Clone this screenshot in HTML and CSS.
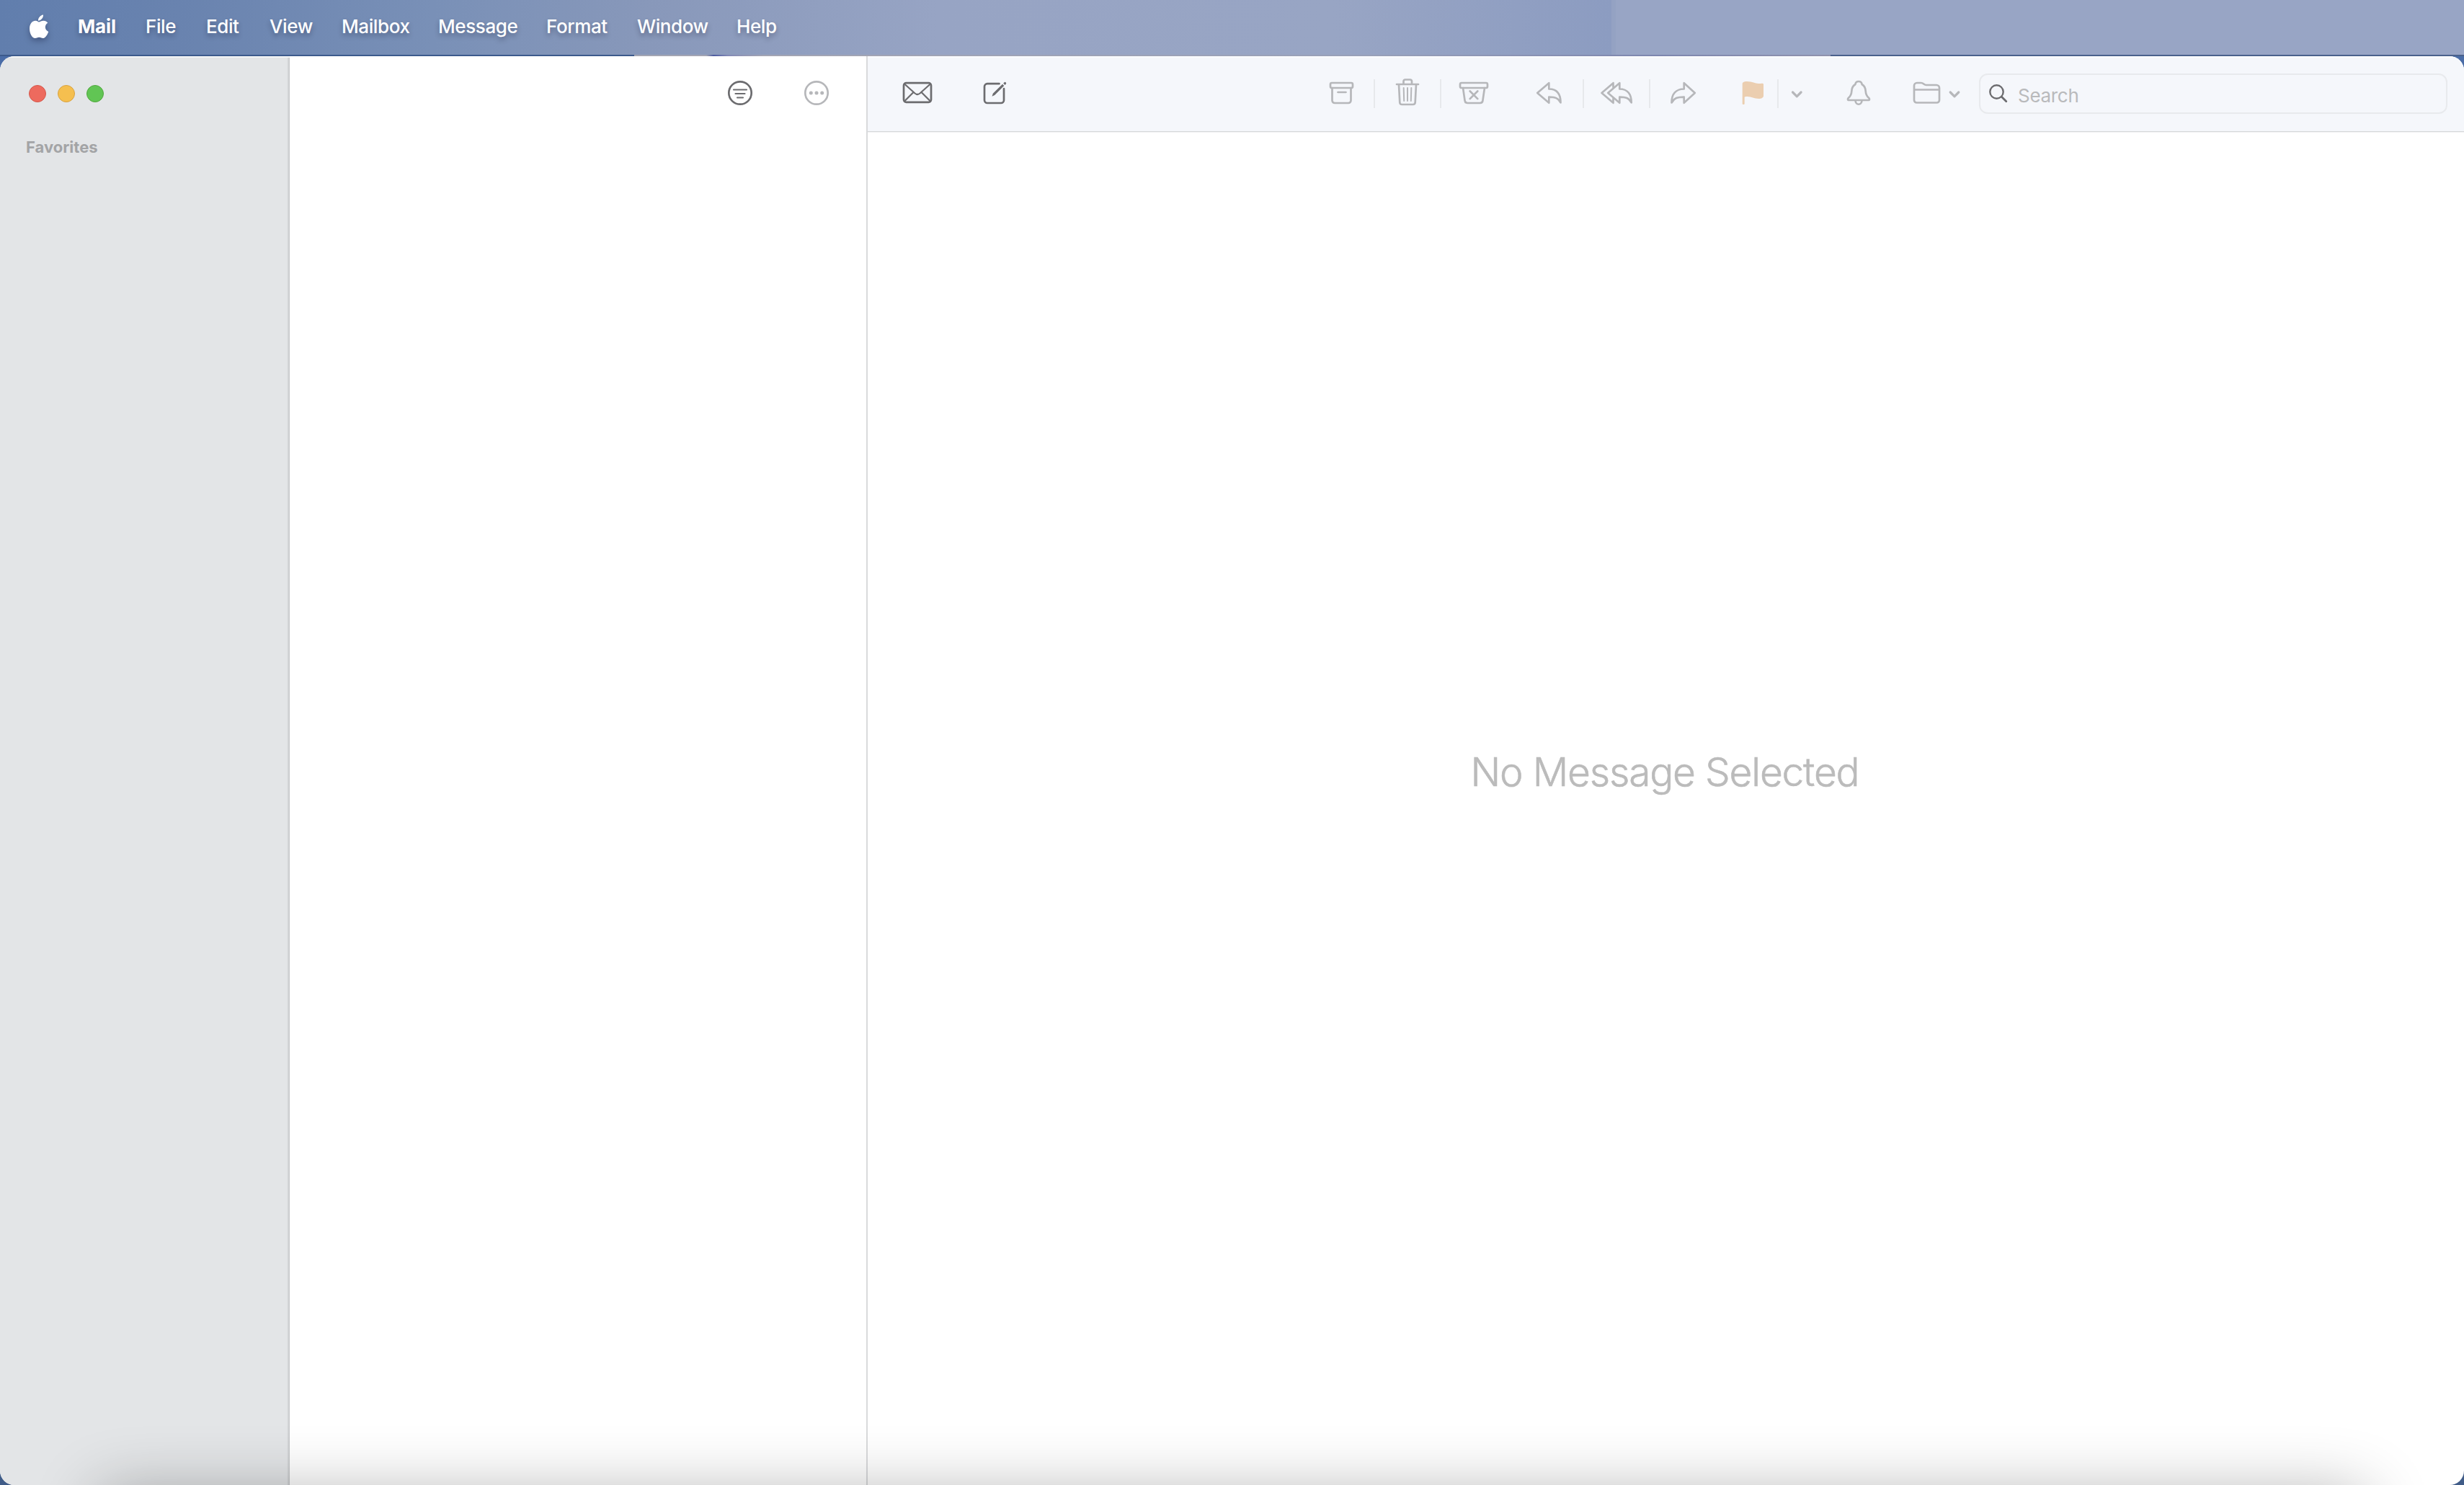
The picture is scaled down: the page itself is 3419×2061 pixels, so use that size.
FILE: index.html
```html
<!DOCTYPE html>
<html lang="en">
<head>
<meta charset="utf-8">
<title>Mail</title>
<link rel="stylesheet" href="styles.css">
</head>
<body>
<nav class="menubar">
  <svg class="apple" width="28" height="36" viewBox="0 0 28 36" fill="#fff"><path d="M20 .5c.3 4-3 8-7 8.200C12.600 5 16.200 1 20 .5z"/><path d="M14 10.500c1.500 0 3.500-1.700 6.500-1.700 2.200 0 4.400 1 5.800 3-5 3-4.300 10 .9 12.100-1.200 3.600-4 8.900-7.200 9.100-2 .1-3-1.300-5.700-1.300-2.600 0-3.700 1.300-5.500 1.300C4.700 33 1 26.500 1 19.700c0-7 4.200-10.900 8.300-10.900 2 0 3.700 1.700 4.700 1.700z"/></svg>
  <span class="menu app">Mail</span>
  <span class="menu">File</span>
  <span class="menu">Edit</span>
  <span class="menu">View</span>
  <span class="menu">Mailbox</span>
  <span class="menu">Message</span>
  <span class="menu">Format</span>
  <span class="menu">Window</span>
  <span class="menu">Help</span>
</nav>
<div class="backdrop-strip"></div>
<main class="window">
  <aside class="sidebar">
    <div class="lights"><i class="light close"></i><i class="light minimize"></i><i class="light zoom"></i></div>
    <h2 class="heading">Favorites</h2>
  </aside>
  <section class="list">
    <svg class="icon dark" viewBox="0 0 48 48"><circle cx="24" cy="24" r="15.700"/><path d="M15 19.500h18M17.500 25h13M20 30.500h8" stroke-width="2.200"/></svg>
    <svg class="icon" viewBox="0 0 48 48"><circle cx="24" cy="24" r="15.700"/><g class="solid"><circle cx="16.300" cy="24" r="2.500"/><circle cx="24" cy="24" r="2.500"/><circle cx="31.700" cy="24" r="2.500"/></g></svg>
  </section>
  <section class="viewer">
    <header class="toolbar">
      <div class="compose">
        <svg class="icon dark" viewBox="0 0 48 48"><rect x="5" y="10.200" width="38" height="26.600" rx="3.500"/><path d="M6 11.500l14.500 13q3.500 3 7 0l14.500-13M6 35.500l12-12M42 35.500l-12-12" stroke-width="2.200"/></svg>
        <svg class="icon dark" viewBox="0 0 48 48"><path d="M31.500 11.200H15a4 4 0 0 0-4 4V34a4 4 0 0 0 4 4h19a4 4 0 0 0 4-4V18"/><path class="solid" d="M21.500 28.700l1.300-3.900L36 11.700l2.300 2.300-13.100 13zM37.200 10.600l1.200-1.200a1.600 1.600 0 0 1 2.300 2.300l-1.300 1.200z"/></svg>
      </div>
      <div class="group">
        <svg class="icon" viewBox="0 0 48 48"><rect x="9" y="10" width="31" height="7" rx="2"/><path d="M11.500 17v17.500a3.500 3.500 0 0 0 3.500 3.500h19a3.500 3.500 0 0 0 3.500-3.500V17M19.500 23h11"/></svg>
        <i class="sep"></i>
        <svg class="icon" viewBox="0 0 48 48"><path d="M9 12h30M18.500 12V8a2.500 2.500 0 0 1 2.500-2.500h6.500A2.500 2.500 0 0 1 30 8v4M12 12.500l1.300 24.700a3 3 0 0 0 3 2.800h15.400a3 3 0 0 0 3-2.800L36 12.500"/><path d="M18.700 17l.5 18M24 17v18M29.300 17l-.5 18" stroke-width="2"/></svg>
        <i class="sep"></i>
        <svg class="icon" viewBox="0 0 48 48"><rect x="5" y="10" width="38" height="7" rx="2"/><path d="M9 17l2.600 17.800a3.700 3.700 0 0 0 3.700 3.200h17.400a3.700 3.700 0 0 0 3.700-3.200L39 17M18.700 21.500l10.600 10.600M29.300 21.500L18.700 32.100"/></svg>
      </div>
      <div class="group replies">
        <svg class="icon" viewBox="0 0 48 48"><path d="M6.200 24L22.300 10.200v8.300C33.500 18.500 38.500 26 38.500 37.500 35.500 31 30.500 29.600 22.300 29.600V37.800z"/></svg>
        <i class="sep"></i>
        <svg class="icon" viewBox="0 0 48 48"><path d="M12.200 24L28.300 10.200v8.300C39.500 18.500 44.700 26 44.700 37.500 41.500 31 36.500 29.600 28.300 29.600V37.800z"/><path d="M19.500 16v-5.800L3.500 24l16 13.800V32"/></svg>
        <i class="sep"></i>
        <svg class="icon" viewBox="0 0 48 48"><path d="M40.800 24L25.700 10.200v8.300C14 18.500 8.500 26 8.500 37.500 12 31 17 29.600 25.700 29.600V37.800z"/></svg>
      </div>
      <div class="group flagging">
        <svg class="icon flag" viewBox="0 0 48 48"><path d="M9.700 11.500c0-2 2-3.500 6.300-3.500 8 0 11 3 16 3 3 0 7-1.300 7 1V28c0 2.500-3 4-6.500 4-7 0-10-3-16-3-2 0-3.800.4-3.800.9v9c0 1.500-3 1.500-3 0z"/></svg>
        <i class="sep"></i>
        <svg class="chevron" viewBox="0 0 24 48"><path d="M6.500 23l5.800 5.800 5.800-5.800"/></svg>
      </div>
      <svg class="icon bell" viewBox="0 0 48 48"><path d="M10.500 34C8.500 34 8.700 32 10 30.800c3-2.500 4-4.800 4.300-9.300.4-5.500 1.500-7.700 5-9.300.4-2.500 2-4.200 4.700-4.200s4.300 1.700 4.700 4.200c3.500 1.600 4.600 3.800 5 9.300.3 4.500 1.300 6.800 4.300 9.300 1.300 1.200 1.500 3.200-.5 3.200zM19.500 34.500c.3 7 8.700 7 9 0"/></svg>
      <div class="move">
        <svg class="icon" viewBox="0 0 48 48"><path d="M7 34V14a4 4 0 0 1 4-4h5.500c4 0 3.500 3 7.500 3h14a4 4 0 0 1 4 4v17a3.500 3.500 0 0 1-3.500 3.500h-28A3.500 3.500 0 0 1 7 34zM7 19.500h35"/></svg>
        <svg class="chevron" viewBox="0 0 24 48"><path d="M6.200 23l5.800 5.800 5.800-5.800"/></svg>
      </div>
      <label class="search">
        <svg class="lens" width="26" height="26" viewBox="0 0 26 26"><circle cx="10.500" cy="10.500" r="9.200"/><path d="M17.300 17.300l6.500 6.500" stroke-width="2.800"/></svg>
        <span class="placeholder">Search</span>
      </label>
    </header>
    <div class="empty"><p class="notice">No Message Selected</p></div>
  </section>
  <div class="dock-shadow"></div>
</main>
</body>
</html>
```
FILE: styles.css
```css
* { box-sizing: border-box; }
body {
  margin: 0;
  width: 3419px;
  height: 2061px;
  overflow: hidden;
  display: flex;
  flex-direction: column;
  background: linear-gradient(#4a6da8, #405c88);
  font-family: Inter, "Liberation Sans", sans-serif;
}
.menubar {
  height: 76px;
  flex: none;
  display: grid;
  grid-template-columns: 68px 94px 84px 88px 100px 134px 150px 126px 138px 100px;
  padding-left: 40px;
  background: linear-gradient(90deg, #617ead 0, #6983af 250px, #7990b7 600px, #8898ba 900px, #97a4c4 1300px, #98a5c4 1850px, #8c9cc1 2236px, #94a2c3 2236px, #94a2c3 2242px, #98a5c5 2242px);
}
.apple { margin-top: 20px; filter: drop-shadow(0 4px 4px rgba(0, 0, 30, .3)); }
.menu {
  color: #fff;
  font-size: 26px;
  font-weight: 500;
  letter-spacing: -.4px;
  line-height: 74px;
  white-space: nowrap;
  text-shadow: 0 4px 7px rgba(0, 0, 30, .3);
}
.app { font-weight: 700; letter-spacing: -.1px; }
.backdrop-strip {
  height: 2px;
  flex: none;
  background: linear-gradient(90deg, #3c5a8c 880px, #a3a5b3 880px, #a3a5b3 980px, #4c5ba0 990px, #8289b5 1010px, #a3a5b3 1060px, #98a0b8 1900px, #7d86ae 2300px, #8f92ad 2540px, #4a618c 2540px);
}
.window {
  position: relative;
  flex: 1;
  display: grid;
  grid-template-columns: 402px 802px 1fr;
  border-radius: 20px;
  overflow: hidden;
  background: #fff;
}
.sidebar {
  background: linear-gradient(90deg, #e3e5e7 398px, #d3d5d7 400px, #c3c5c7 402px);
  box-shadow: inset 0 2px 0 #f3f4f5;
  padding: 40px 0 0 37px;
}
.lights { display: flex; gap: 16px; padding-left: 3px; }
.light { width: 24px; height: 24px; border-radius: 50%; border: 1px solid; }
.close { background: #ed6a5e; border-color: #d5574b; }
.minimize { background: #f5bf4f; border-color: #d8a241; }
.zoom { background: #61c554; border-color: #51a73e; }
.heading {
  margin: 48px 0 0 -1px;
  font-size: 22px;
  line-height: 28px;
  font-weight: 650;
  color: #a3a4a6;
}
.list {
  display: flex;
  justify-content: flex-end;
  gap: 58px;
  padding: 27px 45px 0 0;
  border-right: 2px solid #d9dadc;
}
.icon, .chevron {
  display: block;
  flex: none;
  width: 48px;
  height: 48px;
  fill: none;
  stroke: #b6b7ba;
  stroke-width: 2.7;
  stroke-linecap: round;
  stroke-linejoin: round;
}
.dark { stroke: #6c6c6f; }
.solid { fill: #b6b7ba; stroke: none; }
.dark .solid { fill: #6c6c6f; }
.chevron { width: 24px; stroke-width: 3.2; }
.viewer { display: flex; flex-direction: column; }
.toolbar {
  height: 105px;
  flex: none;
  display: flex;
  align-items: flex-start;
  padding: 27px 23px 0 45px;
  background: #f5f7fb;
  border-bottom: 1px solid #d6d8da;
  box-shadow: inset 0 2px 0 #fafbfd, 0 1px 0 #f0f0f1;
}
.compose { display: flex; gap: 58px; margin-right: auto; }
.group { display: flex; gap: 21px; }
.replies { margin-left: 58px; }
.flagging { margin-left: 49px; gap: 10px; }
.flagging .chevron { margin-left: 3px; }
.flag { fill: #ebceb0; stroke: none; }
.sep { width: 2px; height: 40px; margin-top: 5px; background: #e7e9ec; }
.bell { margin-left: 50px; }
.move { display: flex; gap: 3px; margin: 0 22px 0 46px; }
.search {
  width: 650px;
  height: 56px;
  margin-top: -3px;
  display: flex;
  align-items: center;
  gap: 14px;
  padding-left: 12px;
  border: 2px solid #e8eaed;
  border-radius: 12px;
}
.lens { fill: none; stroke: #6c6c6f; stroke-width: 2.400; stroke-linecap: round; }
.placeholder { font-size: 26px; letter-spacing: -.3px; line-height: 32px; color: #b9babc; padding-top: 5px; }
.empty { flex: 1; display: flex; align-items: center; justify-content: center; }
.notice {
  margin: 0 3px 103px 0;
  font-size: 55px;
  line-height: 66px;
  font-weight: 300;
  letter-spacing: -1.2px;
  color: #bbb;
  -webkit-text-stroke: .6px #bbb;
  white-space: nowrap;
}
.dock-shadow {
  position: absolute;
  left: 138px;
  right: 138px;
  top: calc(100% + 12px);
  height: 200px;
  box-shadow: 0 0 90px rgba(0, 0, 0, .31);
}
```
